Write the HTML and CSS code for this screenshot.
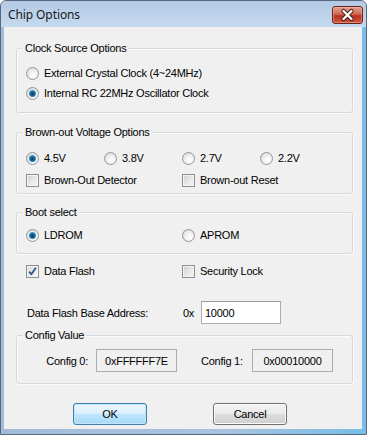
FILE: index.html
```html
<!DOCTYPE html>
<html>
<head>
<meta charset="utf-8">
<link rel="stylesheet" href="styles.css">
</head>
<body>
<div class="window">
  <div class="titlebar">
    <span class="title">Chip Options</span>
    <span class="close">
      <svg width="29" height="16" viewBox="0 0 29 16">
        <path d="M10.5 4 L18.5 12 M18.5 4 L10.5 12" stroke="#4a140e" stroke-width="4.2" stroke-linecap="round"/>
        <path d="M10.5 4 L18.5 12 M18.5 4 L10.5 12" stroke="#ffffff" stroke-width="2.4" stroke-linecap="round"/>
      </svg>
    </span>
  </div>
  <div class="frame">
    <div class="client">
      <div class="group g1">
        <span class="legend">Clock Source Options</span>
        <div class="grid rows1">
          <div class="item full"><span class="radio"></span>External Crystal Clock (4~24MHz)</div>
          <div class="item full"><span class="radio on"></span>Internal RC 22MHz Oscillator Clock</div>
        </div>
      </div>
      <div class="group g2">
        <span class="legend">Brown-out Voltage Options</span>
        <div class="grid rows2">
          <div class="item"><span class="radio on"></span>4.5V</div>
          <div class="item"><span class="radio"></span>3.8V</div>
          <div class="item"><span class="radio"></span>2.7V</div>
          <div class="item"><span class="radio"></span>2.2V</div>
          <div class="item half"><span class="check"></span>Brown-Out Detector</div>
          <div class="item half"><span class="check"></span>Brown-out Reset</div>
        </div>
      </div>
      <div class="group g3">
        <span class="legend">Boot select</span>
        <div class="grid">
          <div class="item half"><span class="radio on"></span>LDROM</div>
          <div class="item half"><span class="radio"></span>APROM</div>
        </div>
      </div>
      <div class="grid flashrow">
        <div class="item half"><span class="check on"><svg width="11" height="11" viewBox="0 0 11 11"><path d="M2.2 5.6 L4.4 8.3 L8.9 1.8" stroke="#3e5690" stroke-width="1.9" fill="none" stroke-linejoin="round"/></svg></span>Data Flash</div>
        <div class="item half"><span class="check"></span>Security Lock</div>
      </div>
      <div class="grid addrrow">
        <div class="item half addrlabel">Data Flash Base Address:</div>
        <div class="item half"><span class="prefix">0x</span><span class="edit">10000</span></div>
      </div>
      <div class="group g4">
        <span class="legend">Config Value</span>
        <div class="configrow">
          <span class="cfglabel c0">Config 0:</span>
          <span class="cfgbox">0xFFFFFF7E</span>
          <span class="cfglabel c1">Config 1:</span>
          <span class="cfgbox">0x00010000</span>
        </div>
      </div>
      <div class="buttons">
        <span class="btn default">OK</span>
        <span class="btn">Cancel</span>
      </div>
    </div>
  </div>
</div>
</body>
</html>
```

FILE: styles.css
```css
html, body {
  margin: 0;
  padding: 0;
  background: #ffffff;
}

.window {
  width: 367px;
  height: 435px;
  box-sizing: border-box;
  border: 1px solid #56697f;
  border-radius: 6px 6px 0 0;
  overflow: hidden;
  display: flex;
  flex-direction: column;
  background: #a9c1dd;
}

.titlebar {
  height: 26px;
  flex: none;
  display: flex;
  align-items: center;
  justify-content: space-between;
  padding: 0 3px 0 7px;
  background: linear-gradient(#b4cae4, #c5d9ef);
}

.title {
  font: 12px "Noto Sans", "Open Sans", sans-serif;
  color: #1a1a1a;
  letter-spacing: -0.1px;
  margin-top: 1px;
}

.close {
  width: 31px;
  height: 18px;
  box-sizing: border-box;
  border: 1px solid #6a2318;
  border-radius: 3px;
  display: flex;
  align-items: center;
  justify-content: center;
  margin-top: 1px;
  background: linear-gradient(#e4a290 0%, #d06a55 45%, #b9301e 55%, #cc5a45 100%);
  box-shadow: inset 0 0 0 1px rgba(255, 200, 185, 0.4);
}

.frame {
  flex: 1;
  display: flex;
  padding: 0 4px 5px 3px;
  background: linear-gradient(90deg, #a5bcd8 0%, #a9c2de 60%, #78bde6 100%);
}

.client {
  flex: 1;
  background: #f0f0f0;
  font: 11px "Liberation Sans", Arial, sans-serif;
  color: #000;
  letter-spacing: -0.25px;
  display: flex;
  flex-direction: column;
}

.group {
  position: relative;
  margin: 0 9px 0 12px;
  border: 1px solid #d5d9dc;
  border-radius: 3px;
  box-shadow: inset 1px 1px 0 #fbfbfb, 1px 1px 0 #fbfbfb;
  padding-left: 9px;
}

.legend {
  position: absolute;
  left: 6px;
  top: -8px;
  line-height: 14px;
  padding: 0 2px;
  background: #f0f0f0;
}

.g1 { margin-top: 21px; padding-top: 16px; padding-bottom: 11px; }
.g2 { margin-top: 19px; padding-top: 17px; padding-bottom: 5px; }
.g3 { margin-top: 18px; padding-top: 14px; padding-bottom: 10px; }
.g4 { margin-top: 11px; padding-top: 13px; padding-bottom: 11px; }

.grid {
  display: grid;
  grid-template-columns: repeat(4, 78px);
  grid-auto-rows: 16px;
}

.rows1 { row-gap: 4px; }
.rows2 { row-gap: 6px; }

.item {
  display: flex;
  align-items: center;
  white-space: nowrap;
}

.full { grid-column: span 4; }
.half { grid-column: span 2; }

.flashrow { margin: 9px 0 0 22px; }

.addrrow {
  margin: 22px 0 0 22px;
  grid-auto-rows: 23px;
}

.addrlabel { padding-left: 1px; }

.prefix {
  width: 19px;
  padding-left: 1px;
  box-sizing: border-box;
}

.edit {
  width: 80px;
  height: 23px;
  box-sizing: border-box;
  border: 1px solid #abadb3;
  border-top-color: #9a9ca3;
  background: #fff;
  padding-left: 3px;
  display: flex;
  align-items: center;
}

.radio {
  flex: none;
  position: relative;
  width: 13px;
  height: 13px;
  box-sizing: border-box;
  border-radius: 50%;
  border: 1px solid #959595;
  background: radial-gradient(circle at 60% 65%, #ffffff 0%, #f3f3f3 35%, #d2d2d2 100%);
  margin-right: 5px;
}

.radio.on::after {
  content: "";
  position: absolute;
  left: 2px;
  top: 2px;
  width: 7px;
  height: 7px;
  border-radius: 50%;
  background: radial-gradient(circle at 50% 55%, #0b3555 0%, #1b5d8c 35%, #47a9dc 75%, #a8dcf5 100%);
}

.check {
  flex: none;
  width: 13px;
  height: 13px;
  box-sizing: border-box;
  border: 1px solid #8e8f8f;
  background: linear-gradient(135deg, #cbcccc 0%, #e6e6e6 50%, #f7f7f7 100%);
  box-shadow: inset 0 0 0 1px #f4f4f4;
  margin-right: 5px;
  display: flex;
}

.check.on {
  background: linear-gradient(135deg, #d4d8de 0%, #eceef1 60%, #fafafa 100%);
}

.configrow {
  display: flex;
  align-items: center;
  height: 23px;
}

.cfglabel { white-space: nowrap; }
.c0 { width: 62px; text-align: right; margin-right: 8px; }
.c1 { width: 43px; margin-left: 24px; margin-right: 8px; }

.cfgbox {
  width: 81px;
  height: 23px;
  box-sizing: border-box;
  border: 1px solid #abadb3;
  background: #f0f0f0;
  display: flex;
  align-items: center;
  justify-content: center;
}

.buttons {
  display: flex;
  margin: 19px 0 0 69px;
  gap: 66px;
}

.btn {
  width: 74px;
  height: 22px;
  box-sizing: border-box;
  border: 1px solid #707070;
  border-radius: 3px;
  display: flex;
  align-items: center;
  justify-content: center;
  background: linear-gradient(#f2f2f2 0%, #ebebeb 50%, #dddddd 51%, #cfcfcf 100%);
  box-shadow: inset 0 0 0 1px #fcfcfc;
}

.btn.default {
  border-color: #3c7fb1;
  background: linear-gradient(#eaf6fd 0%, #d9f0fc 50%, #bee6fd 51%, #a7d9f5 100%);
  box-shadow: inset 0 0 0 1px #c5e4f5;
}
```
